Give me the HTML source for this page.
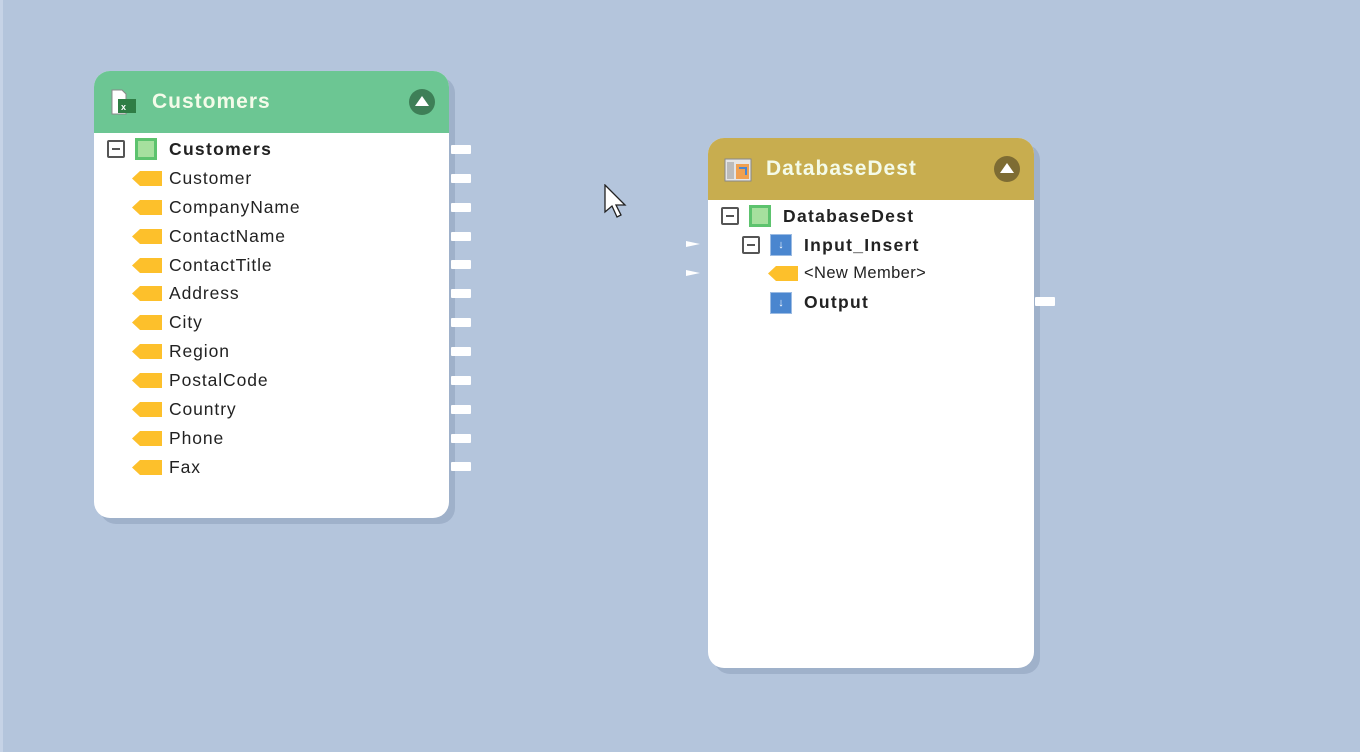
<!DOCTYPE html><html><head><style>
body{margin:0;width:1360px;height:752px;background:#b4c5dc;position:relative;overflow:hidden;font-family:"Liberation Sans",sans-serif}
.p{position:absolute;background:#fff;border-radius:16px;box-shadow:6px 6px 0 rgba(120,140,170,.35)}
.h{position:absolute;left:0;top:0;right:0;border-radius:16px 16px 0 0;color:#f4fbe9;font-size:21px;font-weight:bold;letter-spacing:1px}
.r{position:absolute;font-size:17.5px;color:#222;white-space:nowrap;height:20px;line-height:20px;letter-spacing:.9px}
.b{font-weight:bold;letter-spacing:1.3px}
.mn{position:absolute;width:18px;height:18px;border:2px solid #555;box-sizing:border-box;border-radius:2px}
.mn:after{content:"";position:absolute;left:3px;right:3px;top:6px;height:2px;background:#555}
.gs{position:absolute;width:22px;height:22px;background:#5dc36e;box-sizing:border-box;padding:3px}
.gs:after{content:"";display:block;width:100%;height:100%;background:#a6e09e}
.bl{position:absolute;width:22px;height:22px;background:#4a86cf;border:1px solid #9bbbe3;box-sizing:border-box;color:#fff;font-size:11px;text-align:center;line-height:20px}
.c{position:absolute;width:20px;height:9px;background:#fff;border-radius:1px}
.up{position:absolute;width:26px;height:26px;border-radius:50%}
.up:after{content:"";position:absolute;left:6px;top:7px;border-left:7px solid transparent;border-right:7px solid transparent;border-bottom:10px solid #fff}
</style></head><body>
<div style="position:absolute;left:0;top:0;width:3px;height:752px;background:#c6d3e6"></div>
<div class="p" style="left:94px;top:71px;width:355px;height:447px">
<div class="h" style="height:62px;background:#6cc693">
<svg style="position:absolute;left:16px;top:18px" width="28" height="28"><path d="M2 1h10l4 4v20H2z" fill="#fff" stroke="#888"/><rect x="8" y="10" width="18" height="14" fill="#2f7d45"/><text x="11" y="21" font-size="9" fill="#fff" font-family="Liberation Sans">x</text></svg>
<span style="position:absolute;left:58px;top:19px">Customers</span>
<div class="up" style="left:315px;top:18px;background:#3e7f57"></div></div>
</div>
<div class="mn" style="left:107px;top:140px"></div><div class="gs" style="left:135px;top:138px"></div>
<div class="r b" style="left:169px;top:139px">Customers</div>
<div id="L"></div>
<script>
var n=["Customer","CompanyName","ContactName","ContactTitle","Address","City","Region","PostalCode","Country","Phone","Fax"];var h="";
for(var i=0;i<n.length;i++){var y=178+i*28.85;
h+='<svg style="position:absolute;left:132px;top:'+(y-7)+'px" width="30" height="15"><path d="M0 7.5L8 0h22v15H8z" fill="#fdc02b"/></svg>';
h+='<div class="r" style="left:169px;top:'+(y-10)+'px">'+n[i]+'</div>';}
for(var i=0;i<12;i++){var y=149+i*28.85;h+='<div class="c" style="left:451px;top:'+(y-4)+'px"></div>';}
document.getElementById("L").innerHTML=h;
</script>
<div class="p" style="left:708px;top:138px;width:326px;height:530px">
<div class="h" style="height:62px;background:#c8ad4f">
<svg style="position:absolute;left:16px;top:20px" width="28" height="24"><rect x="1" y="1" width="26" height="22" fill="#e5e5e5" stroke="#888"/><rect x="3" y="4" width="7" height="17" fill="#bbb"/><rect x="12" y="6" width="13" height="15" fill="#f0a050"/><path d="M15 10h7v7" stroke="#4a86cf" stroke-width="2" fill="none"/></svg>
<span style="position:absolute;left:58px;top:19px">DatabaseDest</span>
<div class="up" style="left:286px;top:18px;background:#7e6c33"></div></div>
</div>
<div class="mn" style="left:721px;top:207px"></div><div class="gs" style="left:749px;top:205px"></div>
<div class="r b" style="left:783px;top:206px">DatabaseDest</div>
<div class="mn" style="left:742px;top:236px"></div><div class="bl" style="left:770px;top:234px">&#8595;</div>
<div class="r b" style="left:804px;top:235px">Input_Insert</div>
<svg style="position:absolute;left:768px;top:266px" width="30" height="15"><path d="M0 7.5L8 0h22v15H8z" fill="#fdc02b"/></svg>
<div class="r" style="left:804px;top:263px;font-size:16.5px;letter-spacing:.4px">&lt;New Member&gt;</div>
<div class="bl" style="left:770px;top:292px">&#8595;</div>
<div class="r b" style="left:804px;top:292px">Output</div>
<svg style="position:absolute;left:684px;top:238px" width="20" height="42"><path d="M2 3l14 3-14 3zM2 32l14 3-14 3z" fill="#fff"/></svg>
<div class="c" style="left:1035px;top:297px"></div>
<svg style="position:absolute;left:604px;top:184px" width="24" height="36"><path d="M1 1v27l7-6 5 11 4-2-5-10h9z" fill="#fff" stroke="#222" stroke-width="1.3"/></svg>
</body></html>
